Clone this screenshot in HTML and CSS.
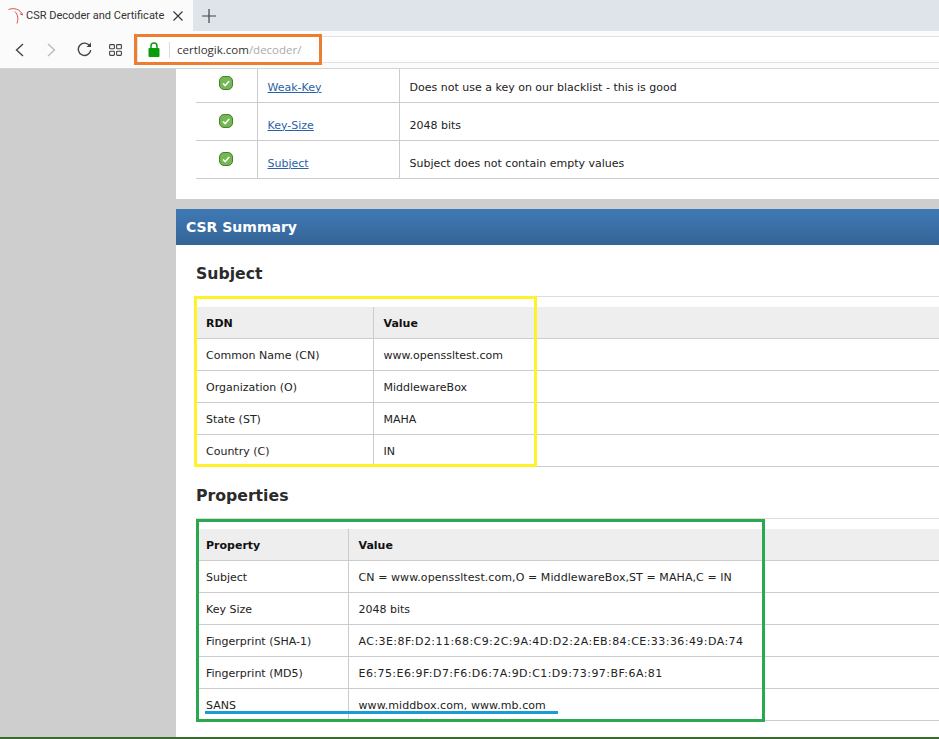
FILE: index.html
```html
<!DOCTYPE html>
<html lang="en">
<head>
    <meta charset="UTF-8">
    <meta name="viewport" content="width=device-width, initial-scale=1.0">
    <title>CSR Decoder and Certificate</title>
    <link rel="stylesheet" href="styles.css">
</head>
<body>
    <div class="tab-strip">
        <div class="tab">
            <svg class="favicon" width="16" height="16" viewBox="0 0 16 16"><path d="M0.500 1.500 C6 -0.500 12 1 14.800 7 L12 5.800 M7 3.500 C10 7 10.500 11 9 15.500" fill="none" stroke="#d9504c" stroke-width="1"/></svg>
            <span class="tab-title">CSR Decoder and Certificate</span>
            <svg class="tab-close" width="10" height="10" viewBox="0 0 10 10"><path d="M0.500 0.500 L9.500 9.500 M9.500 0.500 L0.500 9.500" stroke="#333" stroke-width="1.100"/></svg>
        </div>
        <svg class="new-tab" width="14" height="14" viewBox="0 0 14 14"><path d="M7 0 V14 M0 7 H14" stroke="#444" stroke-width="1.200"/></svg>
    </div>
    <div class="toolbar">
        <svg class="nav-back" width="9" height="14" viewBox="0 0 9 14"><path d="M8 1 L1.500 7 L8 13" fill="none" stroke="#444" stroke-width="1.400"/></svg>
        <svg class="nav-forward" width="9" height="14" viewBox="0 0 9 14"><path d="M1 1 L7.500 7 L1 13" fill="none" stroke="#bbb" stroke-width="1.400"/></svg>
        <svg class="nav-reload" width="15" height="15" viewBox="0 0 15 15"><path d="M12.800 4 A6.200 6.200 0 1 0 13.700 8" fill="none" stroke="#444" stroke-width="1.400"/><path d="M14 0.500 V5 H9.500 Z" fill="#444"/></svg>
        <svg class="nav-grid" width="13" height="12" viewBox="0 0 13 12"><g fill="none" stroke="#444" stroke-width="1.100"><rect x="0.600" y="0.600" width="4.800" height="4.200" rx="0.800"/><rect x="7.600" y="0.600" width="4.800" height="4.200" rx="0.800"/><rect x="0.600" y="7.200" width="4.800" height="4.200" rx="0.800"/><rect x="7.600" y="7.200" width="4.800" height="4.200" rx="0.800"/></g></svg>
        <div class="address-bar">
            <svg class="lock" width="12" height="15" viewBox="0 0 12 15"><path d="M3 7 V4 A3 3 0 0 1 9 4 V7" fill="none" stroke="#0a9c0a" stroke-width="1.500"/><rect x="0.500" y="6" width="11" height="9" rx="1" fill="#0a9c0a"/></svg>
            <span class="address-sep"></span>
            <span class="url">certlogik.com<span class="url-path">/decoder/</span></span>
        </div>
        <div class="mark mark-orange"></div>
    </div>
    <div class="page">
        <div class="side"></div>
        <div class="main">
            <div class="panel panel-top">
                <table class="checks">
                    <tr>
                        <td class="check-icon"><svg width="14" height="14" viewBox="0 0 14 14"><rect x="0.500" y="0.500" width="13" height="13" rx="4.500" fill="#74b853" stroke="#4a7f33"/><path d="M4 7.500 L6.200 9.500 L10.200 5" fill="none" stroke="#fff" stroke-width="1.600"/></svg></td>
                        <td class="check-name"><a href="#">Weak-Key</a></td>
                        <td class="check-text">Does not use a key on our blacklist - this is good</td>
                    </tr>
                    <tr>
                        <td class="check-icon"><svg width="14" height="14" viewBox="0 0 14 14"><rect x="0.500" y="0.500" width="13" height="13" rx="4.500" fill="#74b853" stroke="#4a7f33"/><path d="M4 7.500 L6.200 9.500 L10.200 5" fill="none" stroke="#fff" stroke-width="1.600"/></svg></td>
                        <td class="check-name"><a href="#">Key-Size</a></td>
                        <td class="check-text">2048 bits</td>
                    </tr>
                    <tr>
                        <td class="check-icon"><svg width="14" height="14" viewBox="0 0 14 14"><rect x="0.500" y="0.500" width="13" height="13" rx="4.500" fill="#74b853" stroke="#4a7f33"/><path d="M4 7.500 L6.200 9.500 L10.200 5" fill="none" stroke="#fff" stroke-width="1.600"/></svg></td>
                        <td class="check-name"><a href="#">Subject</a></td>
                        <td class="check-text">Subject does not contain empty values</td>
                    </tr>
                </table>
            </div>
            <div class="panel panel-summary">
                <div class="panel-header">CSR Summary</div>
                <div class="section">
                    <h2>Subject</h2>
                    <table class="data data-subject">
                        <tr><th>RDN</th><th>Value</th></tr>
                        <tr><td>Common Name (CN)</td><td>www.openssltest.com</td></tr>
                        <tr><td>Organization (O)</td><td>MiddlewareBox</td></tr>
                        <tr><td>State (ST)</td><td>MAHA</td></tr>
                        <tr><td>Country (C)</td><td>IN</td></tr>
                    </table>
                    <div class="mark mark-yellow"></div>
                </div>
                <div class="section">
                    <h2>Properties</h2>
                    <table class="data data-props">
                        <tr><th>Property</th><th>Value</th></tr>
                        <tr><td>Subject</td><td class="value-long">CN = www.openssltest.com,O = MiddlewareBox,ST = MAHA,C = IN</td></tr>
                        <tr><td>Key Size</td><td>2048 bits</td></tr>
                        <tr><td>Fingerprint (SHA-1)</td><td class="value-hex">AC:3E:8F:D2:11:68:C9:2C:9A:4D:D2:2A:EB:84:CE:33:36:49:DA:74</td></tr>
                        <tr><td>Fingerprint (MD5)</td><td class="value-hex">E6:75:E6:9F:D7:F6:D6:7A:9D:C1:D9:73:97:BF:6A:81</td></tr>
                        <tr><td>SANS</td><td class="value-long">www.middbox.com, www.mb.com</td></tr>
                    </table>
                    <div class="mark mark-green"></div>
                    <div class="mark mark-blue"></div>
                </div>
            </div>
        </div>
    </div>
    <div class="page-end"></div>
</body>
</html>
```

FILE: styles.css
```css
html, body {
    margin: 0;
    height: 739px;
    overflow: hidden;
}
body {
    font-family: "DejaVu Sans", Verdana, sans-serif;
    font-size: 11px;
    color: #222;
    background: #cecece;
}
.tab-strip {
    display: flex;
    align-items: center;
    height: 31px;
    background: #dfe3ea;
}
.tab {
    display: flex;
    align-items: center;
    box-sizing: border-box;
    width: 193px;
    height: 31px;
    padding: 0 0 0 8px;
    background: #fbfbfb;
}
.favicon {
    flex: none;
    margin-right: 2px;
}
.tab-title {
    width: 140px;
    white-space: nowrap;
    font-family: Roboto, sans-serif;
    font-size: 11px;
    color: #333;
}
.tab-close {
    margin-left: 7px;
}
.new-tab {
    margin-left: 9px;
}
.toolbar {
    position: relative;
    display: flex;
    align-items: center;
    height: 37px;
    background: #fbfbfb;
}
.nav-back {
    margin-left: 15px;
}
.nav-forward {
    margin-left: 23px;
}
.nav-reload {
    margin-left: 21px;
}
.nav-grid {
    margin-left: 17px;
}
.address-bar {
    flex: 1;
    display: flex;
    align-items: center;
    height: 25px;
    margin-left: 15px;
    background: #fff;
    border: 1px solid #e2e2e2;
    border-right: none;
}
.lock {
    margin-left: 10px;
}
.address-sep {
    width: 1px;
    height: 16px;
    margin-left: 9px;
    background: #ddd;
}
.url {
    margin-left: 7px;
    font-family: "Open Sans", sans-serif;
    font-size: 11.5px;
    color: #333;
}
.url-path {
    color: #aaa;
}
.page {
    display: flex;
    height: 669px;
    border-top: 1px solid #d4d4d4;
    box-sizing: border-box;
}
.page-end {
    height: 2px;
    background: #3a6b2e;
}
.side {
    width: 176px;
    flex: none;
}
.main {
    flex: 1;
    overflow: hidden;
}
.panel {
    background: #fff;
}
.panel-top {
    height: 130px;
    padding-left: 20px;
    margin-bottom: 10px;
    overflow: hidden;
}
.checks {
    width: 100%;
    margin-top: -4px;
    border-collapse: collapse;
    table-layout: fixed;
}
.checks td {
    box-sizing: border-box;
    height: 38px;
    padding: 8px 0 0 10px;
    border-bottom: 1px solid #ccc;
}
.checks tr:first-child td {
    height: 37px;
}
.checks .check-icon {
    width: 61px;
    padding: 11px 0 0;
    vertical-align: top;
    border-right: 1px solid #ccc;
}
.check-icon svg {
    display: block;
    margin: 0 auto;
}
.check-name {
    width: 142px;
    border-right: 1px solid #ccc;
}
.check-name a {
    color: #2a62a8;
}
.panel-summary {
    height: 529px;
}
.panel-header {
    height: 36px;
    padding-left: 10px;
    line-height: 36px;
    font-size: 14px;
    font-weight: bold;
    color: #fff;
    background: linear-gradient(#3f7ab5, #346496);
}
.section {
    position: relative;
    padding-left: 20px;
}
h2 {
    margin: 0;
    height: 52px;
    box-sizing: border-box;
    padding-top: 18px;
    font-size: 15.700px;
    line-height: 22px;
    font-weight: bold;
    color: #2b2b2b;
    border-bottom: 1px solid #ddd;
}
.data {
    width: 100%;
    margin-top: 10px;
    border-collapse: collapse;
    table-layout: fixed;
}
.data th, .data td {
    box-sizing: border-box;
    height: 32px;
    padding: 2px 0 0 10px;
    text-align: left;
    border-bottom: 1px solid #ccc;
    border-right: 1px solid #ccc;
}
.data th {
    height: 31px;
    background: #eee;
    color: #111;
}
.data-props th {
    height: 32px;
}
.data th:first-child, .data td:first-child {
    width: 177px;
}
.data-props th:first-child, .data-props td:first-child {
    width: 152px;
}
.data th:last-child, .data td:last-child {
    border-right: none;
}
.value-long {
    letter-spacing: 0.08px;
}
.value-hex {
    letter-spacing: 0.44px;
}
.mark {
    position: absolute;
    box-sizing: border-box;
    border: 3px solid;
}
.mark-orange {
    left: 134px;
    top: 3px;
    width: 188px;
    height: 31px;
    border-color: #ed7d31;
}
.mark-yellow {
    left: 18px;
    top: 51px;
    width: 343px;
    height: 171px;
    border-color: #fff22b;
}
.mark-green {
    left: 20px;
    top: 52px;
    width: 569px;
    height: 203px;
    border-color: #2aa850;
}
.mark-blue {
    left: 29px;
    top: 244px;
    width: 353px;
    height: 3px;
    border: none;
    background: #1a9cd8;
}
```
